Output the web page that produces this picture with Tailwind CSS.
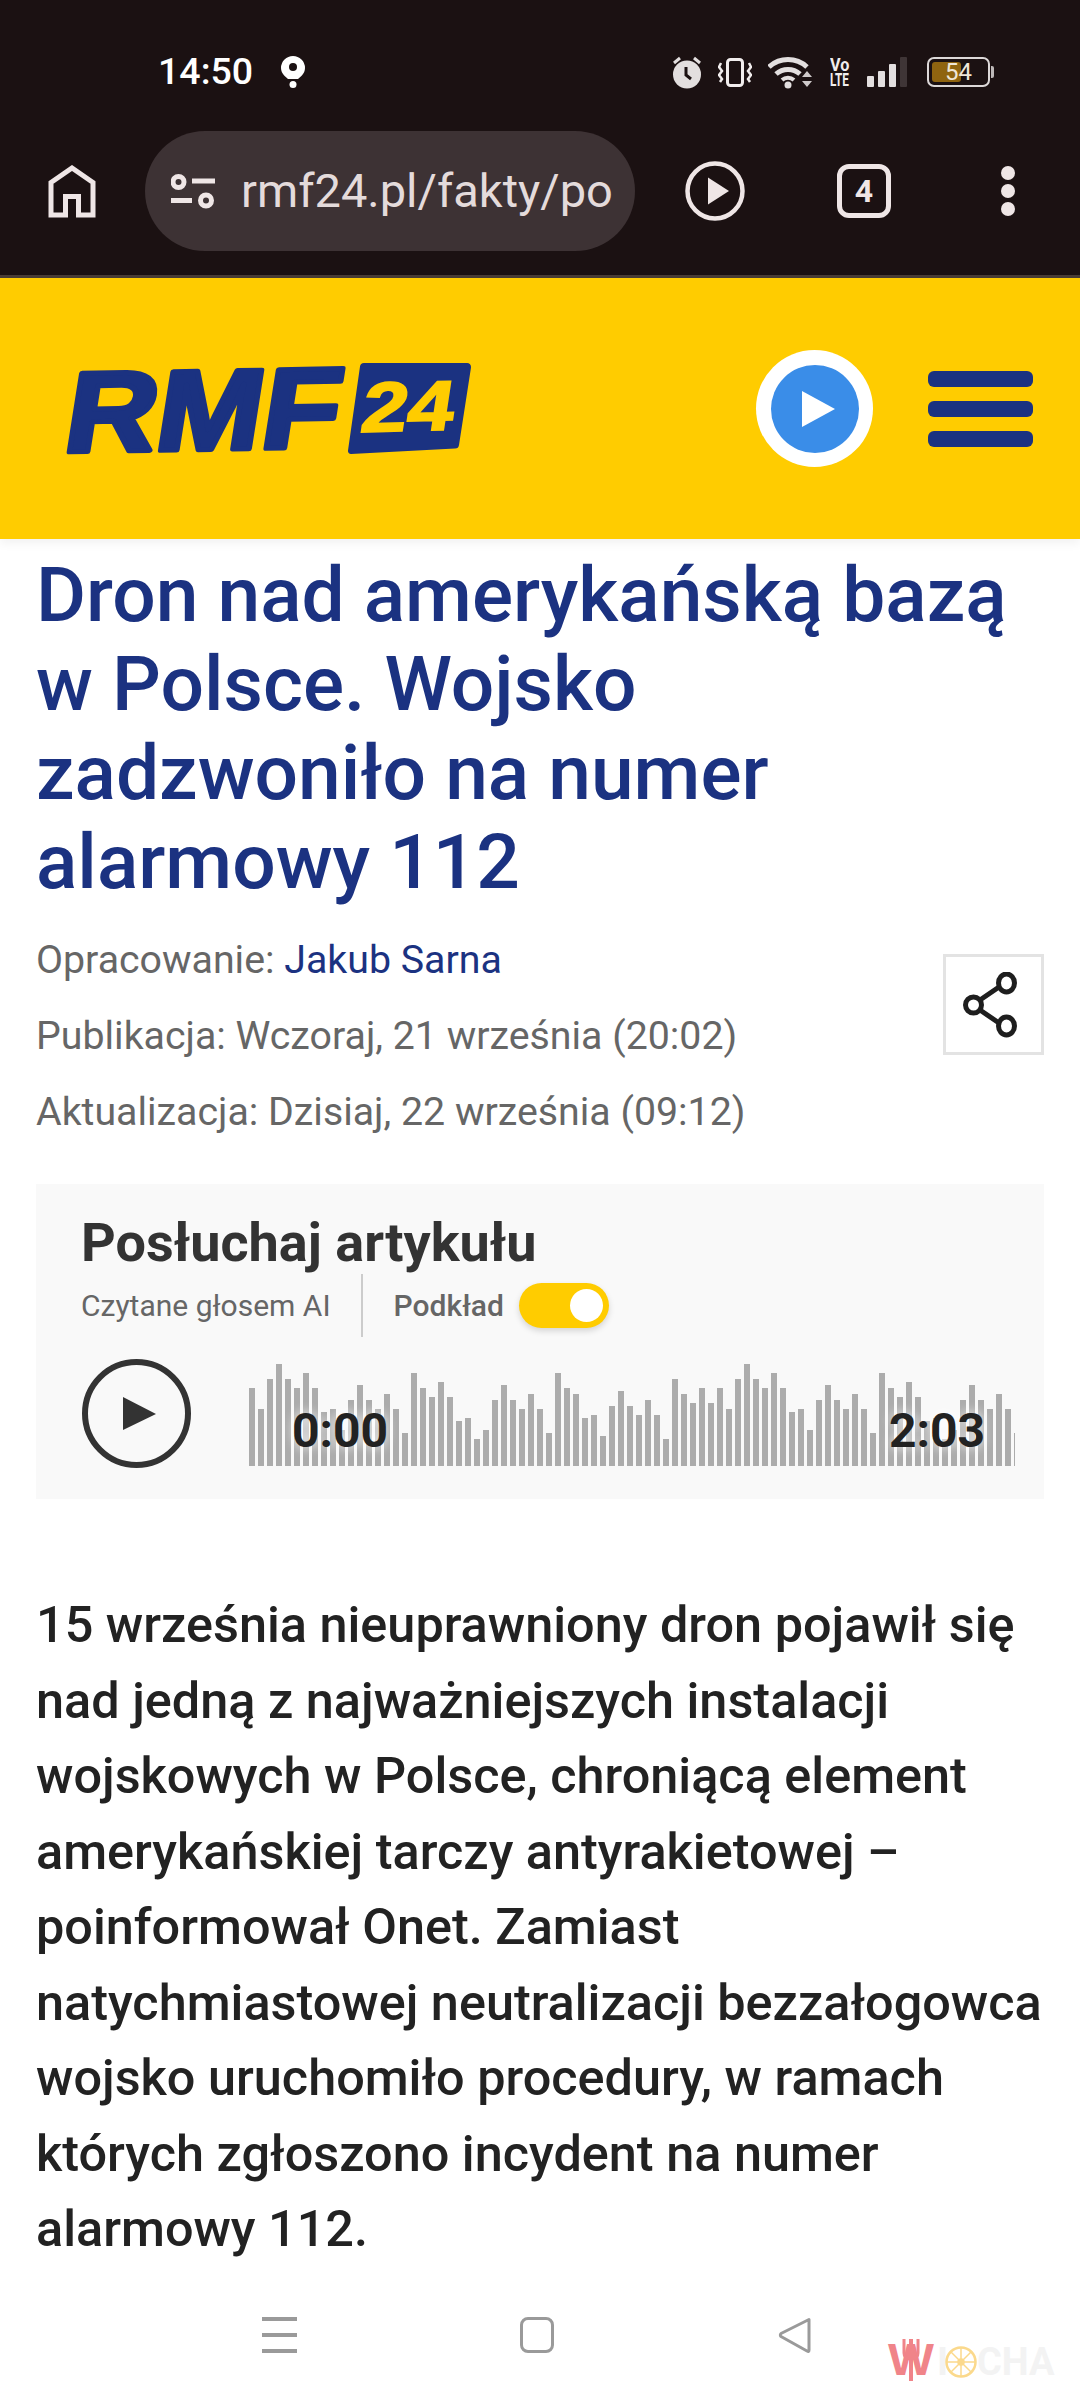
<!DOCTYPE html>
<html lang="pl">
<head>
<meta charset="utf-8">
<script src="https://cdn.jsdelivr.net/npm/@tailwindcss/browser@4"></script>
</head>
<body class="m-0 bg-white">
<div class="relative w-[1080px] h-[2400px] overflow-hidden bg-white font-[Roboto,sans-serif]">

  <!-- browser chrome -->
  <div class="h-[278px] bg-[#1b1112] border-b-[3px] border-[#4a3d36]">
    <div class="h-[131px] pt-[13px] flex items-center pl-[158px] pr-[86px] text-white">
      <span class="text-[37.500px] font-medium leading-none">14:50</span>
      <svg class="ml-[28px]" width="24" height="32" viewBox="0 0 24 32"><path d="M12 0a12 12 0 0 1 12 12c0 6-5 9-7 11H7C5 21 0 18 0 12A12 12 0 0 1 12 0z" fill="#fff"/><circle cx="12" cy="11" r="4" fill="#1b1112"/><circle cx="12" cy="28.500" r="3.500" fill="#fff"/></svg>
      <div class="ml-auto flex items-center gap-4">
        <svg width="30" height="33" viewBox="0 0 30 33"><path d="M2 7l6-5M28 7l-6-5" stroke="#e3dfdf" stroke-width="3"/><circle cx="15" cy="18.500" r="14" fill="#e3dfdf"/><path d="M14 11v8l5 4" fill="none" stroke="#1b1112" stroke-width="3"/></svg>
        <svg width="34" height="29" viewBox="0 0 34 29" fill="none" stroke="#f1eded"><rect x="9.500" y="1.500" width="15" height="26" rx="3" stroke-width="3"/><path d="M3 5l-2 4 3 4-3 4 3 4-2 3M31 5l2 4-3 4 3 4-3 4 2 3" stroke-width="2.500"/></svg>
        <svg width="45" height="33" viewBox="0 0 45 33" fill="none" stroke="#e3dfdf"><path d="M1 11a28 28 0 0 1 38 0" stroke-width="5"/><path d="M8 18a18 18 0 0 1 24 0" stroke-width="5"/><path d="M14 24a9 9 0 0 1 12 0" stroke-width="4"/><circle cx="20" cy="29" r="3.500" fill="#e3dfdf" stroke="none"/><path d="M34 21l5-6 5 6zM34 25l5 6 5-6z" fill="#cfcaca" stroke="none"/></svg>
        <div class="w-[22px] h-[30px] flex flex-col items-center justify-between text-[#f1eded] font-bold font-[&quot;Liberation_Sans&quot;,sans-serif] text-[18px] leading-[15px]">
          <span class="scale-x-[.9]">Vo</span><span class="scale-x-[.65]">LTE</span>
        </div>
        <div class="w-[44px] h-[30px] flex items-end gap-[4px]">
          <div class="w-[7px] h-[11px] rounded-[1px] bg-[#e3dfdf]"></div>
          <div class="w-[7px] h-[16px] rounded-[1px] bg-[#e3dfdf]"></div>
          <div class="w-[7px] h-[23px] rounded-[1px] bg-[#e3dfdf]"></div>
          <div class="w-[7px] h-[30px] rounded-[1px] bg-[#3f3536]"></div>
        </div>
        <div class="flex items-center gap-[1px]">
          <div class="relative w-[63px] h-[30px] rounded-[7px] border-[2px] border-[#dcd8d8] overflow-hidden">
            <div class="absolute left-[3px] top-[3px] bottom-[3px] w-[29px] rounded-[3px] bg-[#8f6410]"></div>
            <span class="absolute inset-0 flex items-center justify-center text-[24px] leading-none text-[#efe7d8]">54</span>
          </div>
          <div class="w-[3px] h-[12px] rounded-r-[2px] bg-[#bdb8b8]"></div>
        </div>
      </div>
    </div>
    <div class="h-[120px] flex items-center">
      <svg class="ml-[48px]" width="48" height="53" viewBox="0 0 48 53" fill="none" stroke="#efe6e6" stroke-width="5"><path d="M3 50V17.500L24 3l21 14.500V50H30.500V31.500h-13V50z"/></svg>
      <div class="ml-[49px] w-[490px] h-[120px] rounded-full bg-[#3d3234] flex items-center">
        <svg class="ml-[26px] shrink-0" width="44" height="36" viewBox="0 0 44 36" fill="none" stroke="#efe6e6" stroke-width="5"><circle cx="7.500" cy="9" r="5.500"/><path d="M21 8h23M0 27.500h21"/><circle cx="35" cy="27.500" r="5.500"/></svg>
        <div class="ml-[26px] w-[372px] overflow-hidden whitespace-nowrap text-[47px] leading-[56px] text-[#e4dbdb]">rmf24.pl/fakty/polska</div>
      </div>
      <svg class="ml-[50px]" width="60" height="60" viewBox="0 0 60 60"><circle cx="30" cy="30" r="27.500" fill="none" stroke="#efe6e6" stroke-width="4.500"/><path d="M23 16.500L44 30 23 43.500z" fill="#efe6e6"/></svg>
      <div class="ml-[92px] w-[54px] h-[54px] rounded-[12px] border-[5px] border-[#efe6e6] flex items-center justify-center text-[32px] font-bold leading-none text-[#efe6e6]">4</div>
      <div class="ml-[110px] flex flex-col gap-[4px]">
        <div class="w-[14px] h-[14px] rounded-full bg-[#efe6e6]"></div>
        <div class="w-[14px] h-[14px] rounded-full bg-[#efe6e6]"></div>
        <div class="w-[14px] h-[14px] rounded-full bg-[#efe6e6]"></div>
      </div>
    </div>
  </div>

  <!-- site header -->
  <div class="relative h-[261px] bg-[#ffcc00] flex items-center pl-[67px] shadow-[0_4px_10px_rgba(0,0,0,0.06)]">
    <svg class="overflow-visible" width="404" height="91" viewBox="0 0 404 91">
      <text transform="translate(-6 89) rotate(-1) skewX(-10)" font-family="Liberation Sans" font-weight="700" font-size="114" fill="#1b3281" stroke="#1b3281" stroke-width="5" stroke-linejoin="round" textLength="274" lengthAdjust="spacingAndGlyphs">RMF</text>
      <path d="M297 0H400a4 4 0 0 1 4 4.500L392 82a4 4 0 0 1-4 3.500L284 91a3 3 0 0 1-3-3.500L293 3.500A4 4 0 0 1 297 0z" fill="#1b3281"/>
      <text transform="translate(292 69) rotate(-1.500) skewX(-10)" font-family="Liberation Sans" font-weight="700" font-size="70" fill="#ffcc00" stroke="#ffcc00" stroke-width="2" textLength="92" lengthAdjust="spacingAndGlyphs">24</text>
    </svg>
    <div class="ml-[285px] w-[117px] h-[117px] rounded-full bg-white flex items-center justify-center">
      <div class="w-[88px] h-[88px] rounded-full bg-[#3a8de8] flex items-center justify-center">
        <svg class="ml-[7px]" width="33" height="36" viewBox="0 0 33 36"><path d="M0 0l33 18L0 36z" fill="#fff"/></svg>
      </div>
    </div>
    <div class="ml-[55px] w-[105px] flex flex-col gap-[14px]">
      <div class="h-[16px] rounded-[6px] bg-[#1b3281]"></div>
      <div class="h-[16px] rounded-[6px] bg-[#1b3281]"></div>
      <div class="h-[16px] rounded-[6px] bg-[#1b3281]"></div>
    </div>
  </div>

  <!-- article -->
  <div class="pl-[36px] pr-[36px]">
    <h1 class="pt-[12px] text-[76.700px] leading-[89px] font-medium text-[#1b3281] whitespace-nowrap">Dron nad amerykańską bazą<br>w Polsce. Wojsko<br>zadzwoniło na numer<br>alarmowy 112</h1>

    <div class="mt-[15px] flex items-start justify-between">
      <div class="text-[39.300px] leading-[76px] text-[#666] whitespace-nowrap">
        <p>Opracowanie: <span class="text-[#1b3281]">Jakub Sarna</span></p>
        <p>Publikacja: Wczoraj, 21 września (20:02)</p>
        <p>Aktualizacja: Dzisiaj, 22 września (09:12)</p>
      </div>
      <div class="mt-[32px] w-[101px] h-[101px] border-[3px] border-[#e3e3e3] flex items-center justify-center">
        <svg class="mr-[5px]" width="56" height="66" viewBox="0 0 56 66" fill="none" stroke="#1e1e1e" stroke-width="5"><circle cx="10.500" cy="33" r="8"/><ellipse cx="43.500" cy="11" rx="8" ry="9"/><ellipse cx="43.500" cy="54" rx="8" ry="9"/><path d="M17 28l19-13M17 38l19 13"/></svg>
      </div>
    </div>

    <div class="mt-[34px] h-[315px] w-[1008px] bg-[#f9f9f9] pl-[46px] pt-[29px]">
      <div class="-ml-px text-[54px] leading-[60px] font-bold text-[#333] whitespace-nowrap">Posłuchaj artykułu</div>
      <div class="mt-px h-[63px] flex items-center">
        <span class="-ml-px text-[30px] text-[#666] whitespace-nowrap">Czytane głosem AI</span>
        <div class="ml-[30px] w-[2px] h-[63px] bg-[#ccc]"></div>
        <span class="ml-[31px] text-[30px] font-medium text-[#666] whitespace-nowrap">Podkład</span>
        <div class="ml-[15px] w-[90px] h-[45px] rounded-full bg-[#ffcc00] flex items-center justify-end pr-[6px] shadow-[0_3px_6px_rgba(0,0,0,0.15)]">
          <div class="w-[33px] h-[33px] rounded-full bg-white"></div>
        </div>
      </div>
      <div class="mt-[22px] flex items-end">
        <svg class="shrink-0" width="109" height="109" viewBox="0 0 109 109"><circle cx="54.500" cy="54.500" r="51.500" fill="none" stroke="#333" stroke-width="6"/><path d="M41 38L74 55 41 71z" fill="#333"/></svg>
        <div class="relative ml-[58px] mb-[2px] flex items-end gap-[3px]">
          <div class="w-[6px] h-[78px] bg-[#acacac]"></div><div class="w-[6px] h-[57px] bg-[#acacac]"></div><div class="w-[6px] h-[87px] bg-[#acacac]"></div><div class="w-[6px] h-[102px] bg-[#acacac]"></div><div class="w-[6px] h-[87px] bg-[#acacac]"></div><div class="w-[6px] h-[78px] bg-[#acacac]"></div><div class="w-[6px] h-[93px] bg-[#acacac]"></div><div class="w-[6px] h-[78px] bg-[#acacac]"></div><div class="w-[6px] h-[54px] bg-[#acacac]"></div><div class="w-[6px] h-[57px] bg-[#acacac]"></div>
          <div class="w-[6px] h-[36px] bg-[#acacac]"></div><div class="w-[6px] h-[66px] bg-[#acacac]"></div><div class="w-[6px] h-[81px] bg-[#acacac]"></div><div class="w-[6px] h-[66px] bg-[#acacac]"></div><div class="w-[6px] h-[57px] bg-[#acacac]"></div><div class="w-[6px] h-[72px] bg-[#acacac]"></div><div class="w-[6px] h-[57px] bg-[#acacac]"></div><div class="w-[6px] h-[33px] bg-[#acacac]"></div><div class="w-[6px] h-[93px] bg-[#acacac]"></div><div class="w-[6px] h-[78px] bg-[#acacac]"></div>
          <div class="w-[6px] h-[69px] bg-[#acacac]"></div><div class="w-[6px] h-[84px] bg-[#acacac]"></div><div class="w-[6px] h-[69px] bg-[#acacac]"></div><div class="w-[6px] h-[45px] bg-[#acacac]"></div><div class="w-[6px] h-[48px] bg-[#acacac]"></div><div class="w-[6px] h-[27px] bg-[#acacac]"></div><div class="w-[6px] h-[36px] bg-[#acacac]"></div><div class="w-[6px] h-[66px] bg-[#acacac]"></div><div class="w-[6px] h-[81px] bg-[#acacac]"></div><div class="w-[6px] h-[66px] bg-[#acacac]"></div>
          <div class="w-[6px] h-[57px] bg-[#acacac]"></div><div class="w-[6px] h-[72px] bg-[#acacac]"></div><div class="w-[6px] h-[57px] bg-[#acacac]"></div><div class="w-[6px] h-[33px] bg-[#acacac]"></div><div class="w-[6px] h-[93px] bg-[#acacac]"></div><div class="w-[6px] h-[78px] bg-[#acacac]"></div><div class="w-[6px] h-[72px] bg-[#acacac]"></div><div class="w-[6px] h-[48px] bg-[#acacac]"></div><div class="w-[6px] h-[51px] bg-[#acacac]"></div><div class="w-[6px] h-[30px] bg-[#acacac]"></div>
          <div class="w-[6px] h-[60px] bg-[#acacac]"></div><div class="w-[6px] h-[75px] bg-[#acacac]"></div><div class="w-[6px] h-[60px] bg-[#acacac]"></div><div class="w-[6px] h-[51px] bg-[#acacac]"></div><div class="w-[6px] h-[66px] bg-[#acacac]"></div><div class="w-[6px] h-[51px] bg-[#acacac]"></div><div class="w-[6px] h-[27px] bg-[#acacac]"></div><div class="w-[6px] h-[87px] bg-[#acacac]"></div><div class="w-[6px] h-[72px] bg-[#acacac]"></div><div class="w-[6px] h-[63px] bg-[#acacac]"></div>
          <div class="w-[6px] h-[78px] bg-[#acacac]"></div><div class="w-[6px] h-[63px] bg-[#acacac]"></div><div class="w-[6px] h-[78px] bg-[#acacac]"></div><div class="w-[6px] h-[57px] bg-[#acacac]"></div><div class="w-[6px] h-[87px] bg-[#acacac]"></div><div class="w-[6px] h-[102px] bg-[#acacac]"></div><div class="w-[6px] h-[87px] bg-[#acacac]"></div><div class="w-[6px] h-[78px] bg-[#acacac]"></div><div class="w-[6px] h-[93px] bg-[#acacac]"></div><div class="w-[6px] h-[78px] bg-[#acacac]"></div>
          <div class="w-[6px] h-[54px] bg-[#acacac]"></div><div class="w-[6px] h-[57px] bg-[#acacac]"></div><div class="w-[6px] h-[36px] bg-[#acacac]"></div><div class="w-[6px] h-[66px] bg-[#acacac]"></div><div class="w-[6px] h-[81px] bg-[#acacac]"></div><div class="w-[6px] h-[66px] bg-[#acacac]"></div><div class="w-[6px] h-[57px] bg-[#acacac]"></div><div class="w-[6px] h-[72px] bg-[#acacac]"></div><div class="w-[6px] h-[57px] bg-[#acacac]"></div><div class="w-[6px] h-[33px] bg-[#acacac]"></div>
          <div class="w-[6px] h-[93px] bg-[#acacac]"></div><div class="w-[6px] h-[78px] bg-[#acacac]"></div><div class="w-[6px] h-[69px] bg-[#acacac]"></div><div class="w-[6px] h-[84px] bg-[#acacac]"></div><div class="w-[6px] h-[69px] bg-[#acacac]"></div><div class="w-[6px] h-[45px] bg-[#acacac]"></div><div class="w-[6px] h-[48px] bg-[#acacac]"></div><div class="w-[6px] h-[27px] bg-[#acacac]"></div><div class="w-[6px] h-[36px] bg-[#acacac]"></div><div class="w-[6px] h-[66px] bg-[#acacac]"></div>
          <div class="w-[6px] h-[81px] bg-[#acacac]"></div><div class="w-[6px] h-[66px] bg-[#acacac]"></div><div class="w-[6px] h-[57px] bg-[#acacac]"></div><div class="w-[6px] h-[72px] bg-[#acacac]"></div><div class="w-[6px] h-[57px] bg-[#acacac]"></div><div class="w-[1px] h-[33px] bg-[#acacac]"></div>
          <span class="absolute left-[43px] bottom-[10px] text-[48px] leading-[50px] font-bold text-[#222] [text-shadow:0_0_12px_#fff]">0:00</span>
          <span class="absolute left-[640px] bottom-[10px] text-[48px] leading-[50px] font-bold text-[#222] [text-shadow:0_0_12px_#fff]">2:03</span>
        </div>
      </div>
    </div>

    <p class="mt-[88px] text-[50.400px] leading-[75.500px] font-medium text-[#222] whitespace-nowrap">15 września nieuprawniony dron pojawił się<br>nad jedną z najważniejszych instalacji<br>wojskowych w Polsce, chroniącą element<br>amerykańskiej tarczy antyrakietowej –<br>poinformował Onet. Zamiast<br>natychmiastowej neutralizacji bezzałogowca<br>wojsko uruchomiło procedury, w ramach<br>których zgłoszono incydent na numer<br>alarmowy 112.</p>
  </div>

  <!-- system nav -->
  <div class="mt-[50px] flex items-center pl-[262px]">
    <div class="w-[35px] h-[36px] flex flex-col justify-between">
      <div class="h-[4px] bg-[#9a9a9a]"></div><div class="h-[4px] bg-[#9a9a9a]"></div><div class="h-[4px] bg-[#9a9a9a]"></div>
    </div>
    <div class="ml-[223px] w-[34px] h-[36px] rounded-[8px] border-[3px] border-[#9a9a9a]"></div>
    <svg class="ml-[224px]" width="34" height="36" viewBox="0 0 34 36" fill="none" stroke="#9a9a9a" stroke-width="3" stroke-linejoin="round"><path d="M31 2.500L3 16.500a2 2 0 0 0 0 3L29 34c1.500 .8 2 .5 2-1z"/></svg>
  </div>

  <!-- watermark -->
  <svg class="absolute left-[883px] top-[2330px]" width="190" height="56" viewBox="0 0 190 56">
    <text x="5" y="45" font-family="Liberation Sans" font-weight="700" font-size="45" fill="#f08489" textLength="46" lengthAdjust="spacingAndGlyphs">W</text>
    <path d="M28 9v42" stroke="#f08489" stroke-width="4"/><path d="M21 9v14q0 6 7 6t7-6V9" fill="none" stroke="#f08489" stroke-width="3"/>
    <text x="54" y="45" font-family="Roboto" font-weight="700" font-size="38" fill="#f3f3f3">I</text>
    <circle cx="78" cy="32" r="14.500" fill="none" stroke="#fbd98c" stroke-width="2.500"/>
    <circle cx="78" cy="32" r="3" fill="none" stroke="#fbd98c" stroke-width="1.500"/>
    <path d="M78 18v28M64 32h28M68 22l20 20M88 22L68 42" stroke="#fbd98c" stroke-width="1.500"/>
    <text x="94" y="45" font-family="Roboto" font-weight="700" font-size="38" fill="#f3f3f3">CHA</text>
  </svg>
</div>
</body>
</html>
